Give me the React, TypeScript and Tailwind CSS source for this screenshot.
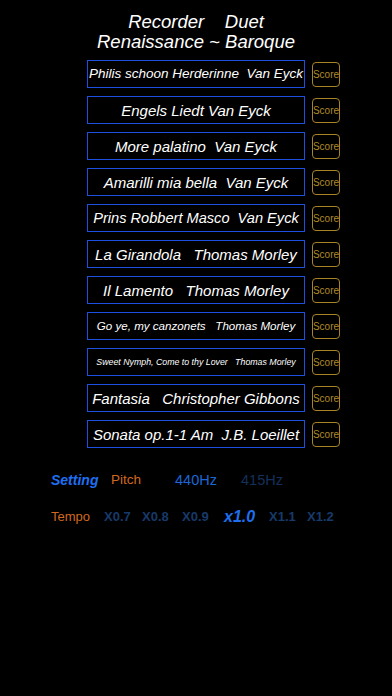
import React from "react";

const rows: { t: string; size: string }[] = [
  { t: "Philis schoon Herderinne  Van Eyck", size: "text-[13.5px]" },
  { t: "Engels Liedt Van Eyck", size: "text-[15px]" },
  { t: "More palatino  Van Eyck", size: "text-[15px]" },
  { t: "Amarilli mia bella  Van Eyck", size: "text-[15px]" },
  { t: "Prins Robbert Masco  Van Eyck", size: "text-[14.6px]" },
  { t: "La Girandola   Thomas Morley", size: "text-[15px]" },
  { t: "Il Lamento   Thomas Morley", size: "text-[15px]" },
  { t: "Go ye, my canzonets   Thomas Morley", size: "text-[11.6px]" },
  { t: "Sweet Nymph, Come to thy Lover   Thomas Morley", size: "text-[8.8px]" },
  { t: "Fantasia   Christopher Gibbons", size: "text-[15px]" },
  { t: "Sonata op.1-1 Am  J.B. Loeillet", size: "text-[15px]" },
];

export default function App() {
  return (
    <div className="w-full h-[696px] bg-black font-['Liberation_Sans',Arial,sans-serif] overflow-hidden">
      <div className="pt-[12px] flex flex-col items-center text-white italic text-[18.5px] leading-[20px] whitespace-pre">
        <div>{"Recorder    Duet"}</div>
        <div>Renaissance ~ Baroque</div>
      </div>
      <div className="mt-[8px] flex flex-col gap-[8px]">
        {rows.map((r, i) => (
          <div key={i} className="flex items-center pl-[87px]">
            <div className="w-[218px] h-[28px] border border-[#1d4fe0] flex items-center justify-center">
              <span className={`${r.size} italic text-white whitespace-pre leading-none`}>{r.t}</span>
            </div>
            <div className="ml-[7px] w-[28px] h-[25px] mt-[1px] rounded-[4px] border border-[#a88424] flex items-center justify-center text-[10px] text-[#b08a28] leading-none">
              Score
            </div>
          </div>
        ))}
      </div>
      <div className="mt-[22px] flex items-center pl-[51px] leading-[20px] whitespace-pre">
        <span className="w-[60px] text-[14px] font-bold italic text-[#1f6ff2]">Setting</span>
        <span className="w-[64px] text-[13.5px] text-[#d2681f]">Pitch</span>
        <span className="w-[66px] text-[14.5px] text-[#1d66d6]">440Hz</span>
        <span className="text-[14.5px] text-[#14305a]">415Hz</span>
      </div>
      <div className="mt-[17px] flex items-center pl-[51px] leading-[20px] whitespace-pre font-bold text-[13px] text-[#173a6a]">
        <span className="w-[53px] font-normal text-[#d2681f]">Tempo</span>
        <span className="w-[38px]">X0.7</span>
        <span className="w-[40px]">X0.8</span>
        <span className="w-[42px]">X0.9</span>
        <span className="w-[45px] italic text-[16px] text-[#1f70ee]">x1.0</span>
        <span className="w-[38px]">X1.1</span>
        <span>X1.2</span>
      </div>
    </div>
  );
}
